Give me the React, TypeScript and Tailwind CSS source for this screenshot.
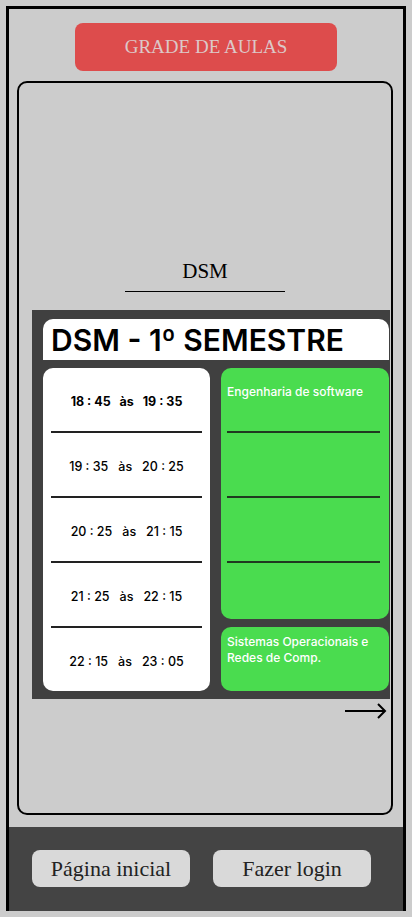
import React from "react";

const serif = { fontFamily: '"Liberation Serif", "DejaVu Serif", serif' };
const sans = { fontFamily: 'Inter, "Liberation Sans", sans-serif' };

const times = [
  "18 : 45   às   19 : 35",
  "19 : 35   às   20 : 25",
  "20 : 25   às   21 : 15",
  "21 : 25   às   22 : 15",
  "22 : 15   às   23 : 05",
];

export default function App() {
  return (
    <div className="w-[412px] h-[917px] bg-[#cccccc] px-[6px] pt-[6px] overflow-hidden">
      <div className="h-[905px] border-x-[3px] border-t-[3px] border-black flex flex-col">
        <div className="mt-[14px] mx-auto w-[262px] h-[48px] rounded-[8px] bg-[#dd4c4c] flex items-center justify-center">
          <span style={serif} className="text-[19px] text-[#dcc8c8] tracking-[0px]">GRADE DE AULAS</span>
        </div>
        <div className="mt-[10px] ml-[8px] w-[376px] h-[734px] border-2 border-black rounded-[10px] flex flex-col">
          <div style={serif} className="mt-[176px] text-center text-[21px] leading-[24px] text-black">DSM</div>
          <div className="mt-[8px] mx-auto w-[160px] h-px bg-black" />
          <div className="mt-[18px] ml-[13px] w-[358px] h-[389px] bg-[#404040] pl-[11px] pr-px pt-[9px] pb-[8px] flex flex-col gap-[8px]">
            <div className="h-[41px] bg-white rounded-t-[10px] flex items-center pl-[8px]">
              <span style={sans} className="text-[30px] font-semibold leading-none text-black">DSM - 1º SEMESTRE</span>
            </div>
            <div className="flex gap-[11px] h-[323px]">
              <div className="w-[167px] bg-white rounded-[10px] flex flex-col">
                {times.map((t, i) => (
                  <React.Fragment key={i}>
                    {i > 0 && <div className="mx-[8px] h-[2px] bg-[#222222]" />}
                    <div className="h-[63px] flex items-center justify-center pt-[6px]">
                      <span
                        style={sans}
                        className={`text-[12.5px] whitespace-pre text-black ${i === 0 ? "font-bold" : "font-medium"}`}
                      >
                        {t}
                      </span>
                    </div>
                  </React.Fragment>
                ))}
              </div>
              <div className="w-[168px] flex flex-col gap-[8px]">
                <div className="h-[251px] bg-[#4adc4f] rounded-[10px] flex flex-col">
                  <div className="h-[63px] pl-[6px] pt-[10px]">
                    <span style={sans} className="text-[12px] leading-[16px] font-medium text-white">Engenharia de software</span>
                  </div>
                  <div className="ml-[6px] mr-[9px] h-[2px] bg-[#1f3a20]" />
                  <div className="h-[63px]" />
                  <div className="ml-[6px] mr-[9px] h-[2px] bg-[#1f3a20]" />
                  <div className="h-[63px]" />
                  <div className="ml-[6px] mr-[9px] h-[2px] bg-[#1f3a20]" />
                </div>
                <div className="h-[64px] bg-[#4adc4f] rounded-[10px] pl-[6px] pt-[7px]">
                  <div style={sans} className="text-[12px] leading-[16px] font-medium text-white">
                    Sistemas Operacionais e
                    <br />
                    Redes de Comp.
                  </div>
                </div>
              </div>
            </div>
          </div>
          <div className="mt-[2px] ml-[326px] w-[42px] h-[20px]">
            <svg width="42" height="20" viewBox="0 0 42 20">
              <line x1="0" y1="10" x2="40" y2="10" stroke="black" strokeWidth="2" />
              <polyline points="33,3 40,10 33,17" fill="none" stroke="black" strokeWidth="2" />
            </svg>
          </div>
        </div>
        <div className="mt-[12px] h-[84px] bg-[#444444] flex items-center pl-[23px] gap-[23px] pb-[1px]">
          <div className="w-[158px] h-[37px] rounded-[8px] bg-[#d9d9d9] flex items-center justify-center">
            <span style={serif} className="text-[22px] text-[#222222]">Página inicial</span>
          </div>
          <div className="w-[158px] h-[37px] rounded-[8px] bg-[#d9d9d9] flex items-center justify-center">
            <span style={serif} className="text-[22px] text-[#222222]">Fazer login</span>
          </div>
        </div>
      </div>
    </div>
  );
}
